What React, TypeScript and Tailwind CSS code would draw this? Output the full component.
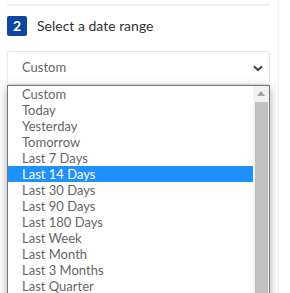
import React from 'react';

const options = [
  'Custom',
  'Today',
  'Yesterday',
  'Tomorrow',
  'Last 7 Days',
  'Last 14 Days',
  'Last 30 Days',
  'Last 90 Days',
  'Last 180 Days',
  'Last Week',
  'Last Month',
  'Last 3 Months',
  'Last Quarter',
  'Last 6 Months',
];

const App: React.FC = () => {
  const selected = 'Last 14 Days';

  return (
    <div className="relative h-[293px] w-[290px] overflow-hidden bg-white" style={{ fontFamily: 'Lato, "Noto Sans", sans-serif' }}>
      <div className="absolute left-[278px] top-0 h-full w-px bg-[#efefef]"></div>
      <div className="w-[270px] pl-[7px] pt-[4px]">
        <div className="h-[2px] w-[263px] bg-[#eeeeee]"></div>

        <div className="mt-[9px] flex items-center gap-[10px]">
          <span className="flex h-[20px] w-[20px] items-center justify-center rounded-[2px] bg-[#0d47a1] text-[14px] font-bold leading-none text-white">2</span>
          <span className="text-[14px] text-[#333]">Select a date range</span>
        </div>

        <div className="relative mt-[15px] flex h-[34px] w-[263px] items-center justify-between rounded-[3px] border border-[#e6e6e6] pl-[14px] pr-[6px] shadow-[0_1px_2px_rgba(0,0,0,0.05)]">
          <span className="text-[13px] text-[#666]">Custom</span>
          <svg width="10" height="7" viewBox="0 0 10 7">
            <path d="M1 1.2 L5 5 L9 1.2" fill="none" stroke="#444" strokeWidth="2" />
          </svg>

          <div className="absolute left-[-1px] top-[33px] z-10 flex h-[230px] w-[263px] border border-[#7a7a7a] bg-white shadow-[0_2px_8px_rgba(0,0,0,0.35)]">
            <div className="flex-1">
              {options.map(o => (
                <div
                  key={o}
                  className={`h-[16px] pl-[14px] text-[13px] leading-[16px] ${o === selected ? 'bg-[#1e90ff] text-white' : 'text-[#666]'}`}
                >
                  {o}
                </div>
              ))}
            </div>
            <div className="flex w-[16px] flex-col items-center bg-[#f1f1f1]">
              <div className="flex h-[17px] items-center justify-center">
                <svg width="8" height="5" viewBox="0 0 8 5">
                  <path d="M0 5 L4 0 L8 5 Z" fill="#a3a3a3" />
                </svg>
              </div>
              <div className="h-full w-[13px] bg-[#c1c1c1]"></div>
            </div>
          </div>
        </div>
      </div>
    </div>
  );
};

export default App;
